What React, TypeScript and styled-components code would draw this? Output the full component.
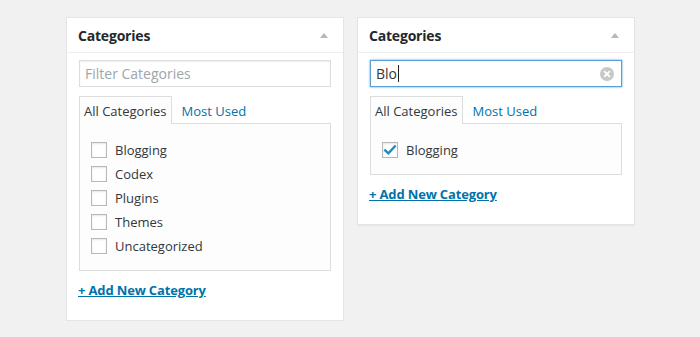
import React from 'react';
import styled, { createGlobalStyle } from 'styled-components';

const GlobalStyle = createGlobalStyle`
  html, body {
    margin: 0;
    padding: 0;
    background: #f1f1f1;
  }
  body {
    font-family: 'Open Sans', 'Liberation Sans', sans-serif;
    font-size: 13px;
    color: #444;
  }
`;

interface BoxProps {
  title: string;
  query: string;
  items: { name: string; checked: boolean }[];
}

function CategoryBox({ title, query, items }: BoxProps): JSX.Element {
  const focused = query.length > 0;
  return (
    <Panel>
      <Header>
        <Title>{title}</Title>
        <Toggle />
      </Header>
      <Inside>
        <FilterWrap>
          <FilterInput $focused={focused}>
            {focused ? (
              <>
                <Typed>{query}</Typed>
                <Caret />
              </>
            ) : (
              <Placeholder>Filter Categories</Placeholder>
            )}
          </FilterInput>
          {focused && (
            <ClearButton>
              <svg width="14" height="14" viewBox="0 0 14 14">
                <circle cx="7" cy="7" r="7" fill="#c8c8c8" />
                <path d="M4.6 4.6 L9.4 9.4 M9.4 4.6 L4.6 9.4" stroke="#fff" strokeWidth="1.8" strokeLinecap="round" />
              </svg>
            </ClearButton>
          )}
        </FilterWrap>
        <Tabs>
          <Tab $active>All Categories</Tab>
          <Tab>Most Used</Tab>
        </Tabs>
        <TabPanel>
          <CheckList>
            {items.map((item) => (
              <CheckRow key={item.name}>
                <Checkbox>
                  {item.checked && (
                    <svg width="14" height="14" viewBox="0 0 14 14">
                      <path d="M2.2 7.4 L5.4 10.4 L11.8 3.4" stroke="#1e8cbe" strokeWidth="2.4" fill="none" strokeLinecap="square" />
                    </svg>
                  )}
                </Checkbox>
                <span>{item.name}</span>
              </CheckRow>
            ))}
          </CheckList>
        </TabPanel>
        <AddLink href="#">+ Add New Category</AddLink>
      </Inside>
    </Panel>
  );
}

export default function App(): JSX.Element {
  const all = ['Blogging', 'Codex', 'Plugins', 'Themes', 'Uncategorized'].map((name) => ({ name, checked: false }));
  return (
    <>
      <GlobalStyle />
      <Page>
        <CategoryBox title="Categories" query="" items={all} />
        <CategoryBox title="Categories" query="Blo" items={[{ name: 'Blogging', checked: true }]} />
      </Page>
    </>
  );
}

const Page = styled.div`
  display: flex;
  align-items: flex-start;
  gap: 13px;
  padding: 17px 0 0 66px;
`;

const Panel = styled.div`
  width: 278px;
  box-sizing: border-box;
  background: #fff;
  border: 1px solid #e5e5e5;
  box-shadow: 0 1px 1px rgba(0, 0, 0, 0.04);
`;

const Header = styled.div`
  height: 34px;
  display: flex;
  align-items: center;
  justify-content: space-between;
  padding: 0 15px 0 11px;
  border-bottom: 1px solid #eee;
`;

const Title = styled.h2`
  margin: 0;
  font-size: 14px;
  font-weight: 700;
  letter-spacing: -0.2px;
  color: #23282d;
`;

const Toggle = styled.span`
  width: 0;
  height: 0;
  border-left: 4px solid transparent;
  border-right: 4px solid transparent;
  border-bottom: 5px solid #b4b9be;
`;

const Inside = styled.div`
  padding: 7px 12px 20px 12px;
`;

const FilterWrap = styled.div`
  position: relative;
`;

const FilterInput = styled.div<{ $focused?: boolean }>`
  height: 27px;
  box-sizing: border-box;
  display: flex;
  align-items: center;
  padding: 0 5px;
  font-size: 14px;
  background: #fff;
  border: 1px solid ${({ $focused }) => ($focused ? '#5b9dd9' : '#ddd')};
  box-shadow: ${({ $focused }) =>
    $focused ? '0 0 2px rgba(30, 140, 190, 0.8)' : 'inset 0 1px 2px rgba(0, 0, 0, 0.07)'};
`;

const Placeholder = styled.span`
  color: #a0a5aa;
`;

const Typed = styled.span`
  color: #32373c;
`;

const Caret = styled.span`
  width: 1px;
  height: 17px;
  background: #222;
  margin-left: 1px;
`;

const ClearButton = styled.span`
  position: absolute;
  right: 8px;
  top: 7px;
  display: flex;
`;

const Tabs = styled.ul`
  list-style: none;
  margin: 9px 0 -1px 0;
  padding: 0;
  display: flex;
  position: relative;
`;

const Tab = styled.li<{ $active?: boolean }>`
  height: 27px;
  box-sizing: content-box;
  display: flex;
  align-items: center;
  padding: 0 5px 0 4px;
  margin-right: 4px;
  font-size: 13px;
  color: ${({ $active }) => ($active ? '#32373c' : '#0073aa')};
  border: 1px solid ${({ $active }) => ($active ? '#ddd' : 'transparent')};
  border-bottom: none;
  background: ${({ $active }) => ($active ? '#fdfdfd' : 'transparent')};
`;

const TabPanel = styled.div`
  border: 1px solid #ddd;
  background: #fdfdfd;
  padding: 14px 11px 12px 11px;
`;

const CheckList = styled.ul`
  list-style: none;
  margin: 0;
  padding: 0;
`;

const CheckRow = styled.li`
  height: 24px;
  display: flex;
  align-items: center;
  gap: 8px;
  font-size: 13px;
  color: #32373c;
`;

const Checkbox = styled.span`
  width: 16px;
  height: 16px;
  box-sizing: border-box;
  display: flex;
  align-items: center;
  justify-content: center;
  background: #fff;
  border: 1px solid #b4b9be;
  box-shadow: inset 0 1px 2px rgba(0, 0, 0, 0.1);
`;

const AddLink = styled.a`
  display: block;
  margin-top: 9px;
  margin-left: -1px;
  line-height: 20px;
  font-size: 13px;
  font-weight: 700;
  letter-spacing: -0.15px;
  color: #0073aa;
  text-decoration: underline;
`;
